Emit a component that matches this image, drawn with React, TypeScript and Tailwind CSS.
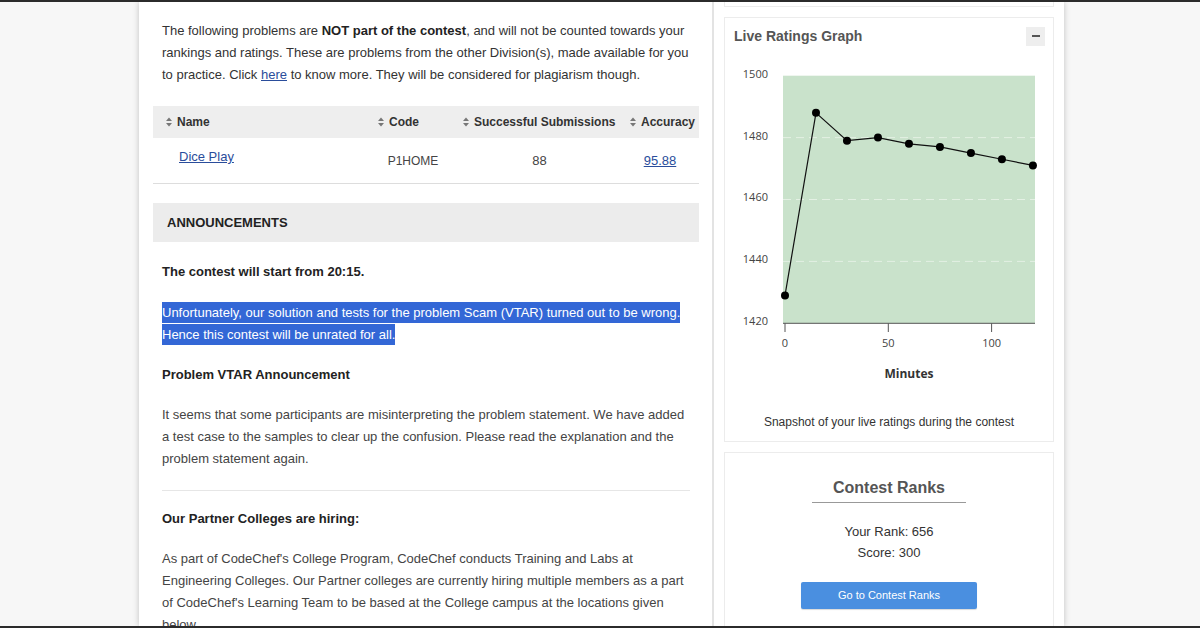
import React from 'react';

const SortIcon = () => (
  <svg width="6" height="10" viewBox="0 0 6 10" className="mr-[5px] shrink-0">
    <polygon points="0,4 3,0.5 6,4" fill="#777" />
    <polygon points="0,6 3,9.5 6,6" fill="#777" />
  </svg>
);

// minutes -> rating snapshots
const ratingPoints: [number, number][] = [
  [0, 1429],
  [15, 1488],
  [30, 1479],
  [45, 1480],
  [60, 1478],
  [75, 1477],
  [90, 1475],
  [105, 1473],
  [120, 1471],
];

const px = (m: number) => 60 + m * 2.066;
const py = (r: number) => 267.3 - (r - 1420) * 3.095;

const RatingsChart: React.FC = () => {
  const line = ratingPoints.map(([m, r]) => `${px(m)},${py(r)}`).join(' ');
  return (
    <svg width="328" height="334" viewBox="0 0 328 334" className="block">
      <rect x="58" y="19.7" width="252" height="247.6" fill="#c9e2cb" />
      {[1480, 1460, 1440].map((r) => (
        <line key={r} x1="58" x2="310" y1={py(r)} y2={py(r)} stroke="#e4f0e4" strokeWidth="1" strokeDasharray="8 5" />
      ))}
      {[1500, 1480, 1460, 1440, 1420].map((r) => (
        <text
          key={r}
          x="43"
          y={py(r) - 1}
          textAnchor="end"
          dominantBaseline="middle"
          fontSize="11"
          fill="#444"
          fontFamily="'Open Sans', sans-serif"
        >
          {r}
        </text>
      ))}
      <line x1="58" x2="310" y1="267.3" y2="267.3" stroke="#555" strokeWidth="1" />
      {[0, 50, 100].map((m) => (
        <g key={m}>
          <line x1={px(m)} x2={px(m)} y1="267.3" y2="276" stroke="#555" strokeWidth="1" />
          <text
            x={px(m)}
            y="288"
            textAnchor="middle"
            dominantBaseline="middle"
            fontSize="11"
            fill="#444"
            fontFamily="'Open Sans', sans-serif"
          >
            {m}
          </text>
        </g>
      ))}
      <text
        x="184"
        y="319"
        textAnchor="middle"
        dominantBaseline="middle"
        fontSize="12"
        fontWeight="bold"
        fill="#333"
        fontFamily="'Open Sans', sans-serif"
      >
        Minutes
      </text>
      <polyline points={line} fill="none" stroke="#111" strokeWidth="1.2" />
      {ratingPoints.map(([m, r]) => (
        <circle key={m} cx={px(m)} cy={py(r)} r="4" fill="#000" />
      ))}
    </svg>
  );
};

export default function App() {
  return (
    <div className="w-[1200px] h-[628px] overflow-hidden bg-[#f7f7f7] flex flex-col font-[family-name:Liberation_Sans,Arial,sans-serif] text-[#333]">
      <div className="h-[2px] bg-[#2b2b2b] shrink-0" />

      <div className="h-[624px] flex overflow-hidden">
        <div className="ml-[139px] w-[925px] bg-white flex shadow-[0_0_6px_rgba(0,0,0,0.22)]">
          {/* Main column */}
          <div className="w-[575px] shrink-0 border-r-2 border-[#e3e3e3] pl-[14px] pr-[13px] pt-[18px] text-[13px] leading-[22px]">
            <p className="px-[9px]">
              The following problems are <b className="text-[#222]">NOT part of the contest</b>, and will not be counted
              towards your rankings and ratings. These are problems from the other Division(s), made available for you
              to practice. Click <a className="text-[#2a4d9b] underline">here</a> to know more. They will be considered
              for plagiarism though.
            </p>

            {/* Problems table */}
            <div className="mt-[20px]">
              <div className="grid grid-cols-[212px_85px_167px_82px] h-[32px] bg-[#eeeeee] items-center text-[12px] font-bold text-[#333]">
                <div className="flex items-center pl-[13px]">
                  <SortIcon />
                  Name
                </div>
                <div className="flex items-center pl-[13px]">
                  <SortIcon />
                  Code
                </div>
                <div className="flex items-center pl-[13px]">
                  <SortIcon />
                  Successful Submissions
                </div>
                <div className="flex items-center pl-[13px]">
                  <SortIcon />
                  Accuracy
                </div>
              </div>
              <div className="grid grid-cols-[212px_85px_167px_82px] h-[46px] border-b border-[#dddddd] text-[13px] leading-[16px]">
                <div className="pl-[26px] pt-[11px]">
                  <a className="text-[#2a4d9b] underline">Dice Play</a>
                </div>
                <div className="pl-[11px] pt-[15px] text-center text-[12px] text-[#444]">P1HOME</div>
                <div className="pl-[12px] pt-[15px] text-center text-[#444]">88</div>
                <div className="pl-[4px] pt-[15px] text-center">
                  <a className="text-[#2a4d9b] underline">95.88</a>
                </div>
              </div>
            </div>

            {/* Announcements */}
            <div className="mt-[19px] h-[39px] bg-[#ececec] flex items-center pl-[14px] text-[13px] font-bold text-[#222]">
              ANNOUNCEMENTS
            </div>

            <div className="px-[9px]">
              <p className="mt-[19px] font-bold text-[#222]">The contest will start from 20:15.</p>
              <p className="mt-[19px] text-white">
                <span className="bg-[#3367d6] py-[3px]">
                  Unfortunately, our solution and tests for the problem Scam (VTAR) turned out to be wrong. Hence this
                  contest will be unrated for all.
                </span>
              </p>
              <p className="mt-[18px] font-bold text-[#222]">Problem VTAR Announcement</p>
              <p className="mt-[18px] text-[#444]">
                It seems that some participants are misinterpreting the problem statement. We have added a test case to
                the samples to clear up the confusion. Please read the explanation and the problem statement again.
              </p>
              <div className="mt-[20px] border-t border-[#e6e6e6]" />
              <p className="mt-[17px] font-bold text-[#222]">Our Partner Colleges are hiring:</p>
              <p className="mt-[18px] text-[#444]">
                As part of CodeChef's College Program, CodeChef conducts Training and Labs at Engineering Colleges. Our
                Partner colleges are currently hiring multiple members as a part of CodeChef's Learning Team to be based
                at the College campus at the locations given below.
              </p>
            </div>
          </div>

          {/* Right column */}
          <div className="flex-1 px-[10px]">
            <div className="h-[5px] border border-t-0 border-[#ececec]" />

            <div className="mt-[10px] h-[425px] border border-[#ececec]">
              <div className="flex items-center justify-between pl-[9px] pr-[8px] pt-[8px]">
                <h3 className="text-[14px] leading-[20px] font-bold text-[#555]">Live Ratings Graph</h3>
                <button className="w-[19px] h-[19px] bg-[#eeeeee] flex items-center justify-center">
                  <span className="block w-[8px] h-[2px] bg-[#555]" />
                </button>
              </div>
              <div className="mt-[10px]">
                <RatingsChart />
              </div>
              <p className="mt-[24px] text-center text-[12px] leading-[16px] text-[#333]">
                Snapshot of your live ratings during the contest
              </p>
            </div>

            <div className="mt-[10px] h-[200px] border border-[#ececec] flex flex-col items-center pt-[25px]">
              <h3 className="px-[21px] pb-[4px] border-b border-[#999] text-[16px] leading-[20px] font-bold text-[#555]">
                Contest Ranks
              </h3>
              <div className="mt-[18px] text-[13px] leading-[21px] text-center text-[#333]">
                <p>Your Rank: 656</p>
                <p>Score: 300</p>
              </div>
              <button className="mt-[19px] w-[176px] h-[27px] bg-[#4a8fe0] rounded-[2px] text-white text-[11px] shadow-[0_1px_1px_rgba(0,0,0,0.15)]">
                Go to Contest Ranks
              </button>
            </div>
          </div>
        </div>
      </div>

      <div className="h-[2px] bg-[#2b2b2b] shrink-0" />
    </div>
  );
}
